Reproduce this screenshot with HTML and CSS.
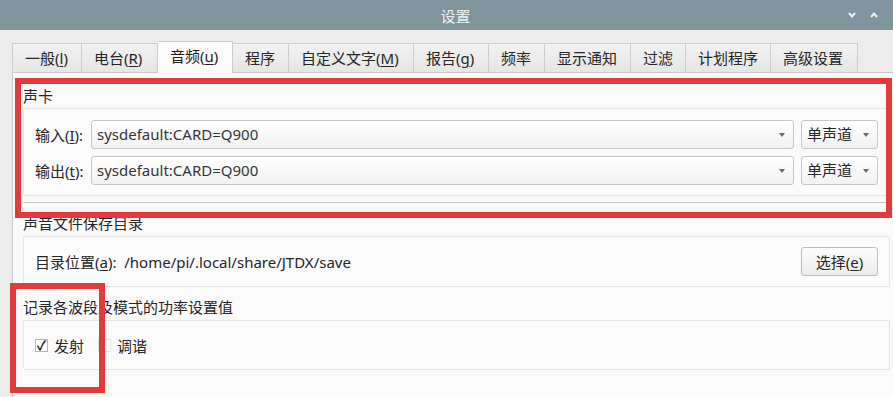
FILE: index.html
```html
<!DOCTYPE html>
<html lang="zh-CN">
<head>
    <meta charset="UTF-8">
    <meta name="viewport" content="width=device-width, initial-scale=1.0">
    <title>设置</title>
    <link rel="stylesheet" href="styles.css">
</head>
<body>
    <div class="titlebar">
        <span class="titulo">设置</span>
        <div class="controls">
            <svg width="10" height="8" viewBox="0 0 10 8"><polyline points="2,2 5,5.5 8,2" fill="none" stroke="#eef2f3" stroke-width="2"/></svg>
            <svg width="10" height="8" viewBox="0 0 10 8"><polyline points="2,6 5,2.5 8,6" fill="none" stroke="#eef2f3" stroke-width="2"/></svg>
        </div>
    </div>

    <div class="finestra">
        <div class="tabs">
            <div class="tab">一般(<u>l</u>)</div>
            <div class="tab">电台(<u>R</u>)</div>
            <div class="tab actiu">音频(<u>u</u>)</div>
            <div class="tab">程序</div>
            <div class="tab">自定义文字(<u>M</u>)</div>
            <div class="tab">报告(<u>g</u>)</div>
            <div class="tab">频率</div>
            <div class="tab">显示通知</div>
            <div class="tab">过滤</div>
            <div class="tab">计划程序</div>
            <div class="tab">高级设置</div>
        </div>

        <div class="panell">
            <div class="titol-grup primer">声卡</div>
            <div class="grup grup-so">
                <div class="fila">
                    <span class="etiqueta">输入(<u>I</u>):</span>
                    <div class="combo ample">sysdefault:CARD=Q900<span class="fletxa"></span></div>
                    <div class="combo canal">单声道<span class="fletxa"></span></div>
                </div>
                <div class="fila">
                    <span class="etiqueta">输出(<u>t</u>):</span>
                    <div class="combo ample">sysdefault:CARD=Q900<span class="fletxa"></span></div>
                    <div class="combo canal">单声道<span class="fletxa"></span></div>
                </div>
            </div>
            <div class="separador"></div>

            <div class="titol-grup">声音文件保存目录</div>
            <div class="grup grup-dir">
                <span class="dir">目录位置(<u>a</u>):&nbsp; /home/pi/.local/share/JTDX/save</span>
                <button class="boto">选择(<u>e</u>)</button>
            </div>

            <div class="titol-grup">记录各波段及模式的功率设置值</div>
            <div class="grup grup-check">
                <span class="check marcat">✓</span><span class="check-text">发射</span>
                <span class="check apagat"></span><span class="check-text">调谐</span>
            </div>
        </div>
    </div>

    <div class="marca marca-so"></div>
    <div class="marca marca-check"></div>
</body>
</html>
```

FILE: styles.css
```css
html {
    height: 100%;
}
body {
    margin: 0;
    height: 397px;
    overflow: hidden;
    background: #ececec;
    font-family: 'Noto Sans', 'Noto Sans CJK SC', sans-serif;
    font-size: 15px;
    color: #262626;
    position: relative;
}

u {
    text-decoration-thickness: 1px;
    text-underline-offset: 2px;
}

.titlebar {
    height: 30px;
    background: #7e959b;
    color: #eef2f3;
    display: flex;
    align-items: center;
    justify-content: center;
    position: relative;
}

.titulo {
    font-size: 15px;
    margin-left: 18px;
}

.controls {
    position: absolute;
    right: 14px;
    top: 11px;
    display: flex;
    gap: 12px;
}

.finestra {
    padding: 11px 0 0 12px;
    border-left: 3px solid #f5e9dc;
    margin-left: -3px;
}

.tabs {
    display: flex;
    align-items: flex-end;
    height: 31px;
    position: relative;
    z-index: 1;
}

.tab {
    height: 28px;
    line-height: 28px;
    padding: 0 12px;
    background: linear-gradient(#f1f1f1, #e6e6e6);
    border: 1px solid #cdcdcd;
    border-bottom: none;
    border-left: none;
    white-space: nowrap;
}

.tab:first-child {
    border-left: 1px solid #cdcdcd;
}

.tab:nth-child(1) { width: 44px; }
.tab:nth-child(2) { width: 51px; }
.tab:nth-child(3) { width: 50px; }
.tab:nth-child(4) { width: 31px; }
.tab:nth-child(5) { width: 100px; }
.tab:nth-child(6) { width: 50px; }
.tab:nth-child(7) { width: 31px; }
.tab:nth-child(8) { width: 61px; }
.tab:nth-child(9) { width: 30px; }
.tab:nth-child(10) { width: 60px; }
.tab:nth-child(11) { width: 62px; }

.tab.actiu {
    height: 31px;
    line-height: 28px;
    background: #fbfbfb;
    margin-bottom: -1px;
    color: #1e1e1e;
}

.panell {
    background: #fafafa;
    border-top: 1px solid #c9c9c9;
    border-left: 1px solid #c9c9c9;
    padding: 0 3px 0 10px;
    height: 330px;
}

.titol-grup {
    height: 20px;
    line-height: 20px;
    margin-top: 10px;
    margin-bottom: 3px;
}

.titol-grup.primer {
    margin-top: 13px;
    margin-bottom: 2px;
}

.grup {
    border: 1px solid #e4e4e4;
    border-radius: 2px;
    background: #fbfbfb;
    padding: 0 11px;
}

.grup-so {
    padding-top: 11px;
    padding-bottom: 10px;
    display: flex;
    flex-direction: column;
    gap: 7px;
}

.fila {
    display: flex;
    align-items: center;
    gap: 7px;
}

.etiqueta {
    width: 49px;
    white-space: nowrap;
}

.combo {
    height: 27px;
    line-height: 27px;
    border: 1px solid #c6c6c6;
    border-radius: 3px;
    background: linear-gradient(#ffffff, #f2f2f2);
    color: #353535;
    padding-left: 5px;
    position: relative;
    box-sizing: content-box;
}

.ample {
    flex: 1;
}

.canal {
    width: 70px;
    color: #262626;
}

.fletxa {
    position: absolute;
    right: 8px;
    top: 12px;
    border-left: 3.5px solid transparent;
    border-right: 3.5px solid transparent;
    border-top: 4px solid #6a6a6a;
}

.separador {
    height: 1px;
    background: #c4c4c4;
    margin-top: 6px;
}

.grup-dir {
    height: 49px;
    display: flex;
    align-items: center;
    justify-content: space-between;
}

.boto {
    width: 77px;
    height: 29px;
    border: 1px solid #bcbcbc;
    border-radius: 3px;
    background: linear-gradient(#fdfdfd, #ececec);
    font-family: 'Noto Sans', 'Noto Sans CJK SC', sans-serif;
    font-size: 15px;
    color: #262626;
    padding: 0;
}

.grup-check {
    height: 48px;
    display: flex;
    align-items: center;
}

.check {
    width: 11px;
    height: 11px;
    border: 1px solid #b4b4b4;
    background: #fff;
    font-size: 13px;
    font-weight: bold;
    line-height: 11px;
    text-align: center;
    color: #1a1a1a;
    margin-right: 6px;
}

.check.apagat {
    border-color: #e2e2e2;
    margin-left: 14px;
}

.marca {
    position: absolute;
    border: 6px solid #e43a3c;
}

.marca-so {
    left: 15px;
    top: 78px;
    width: 865px;
    height: 128px;
}

.marca-check {
    left: 10px;
    top: 283px;
    width: 83px;
    height: 98px;
}
```
